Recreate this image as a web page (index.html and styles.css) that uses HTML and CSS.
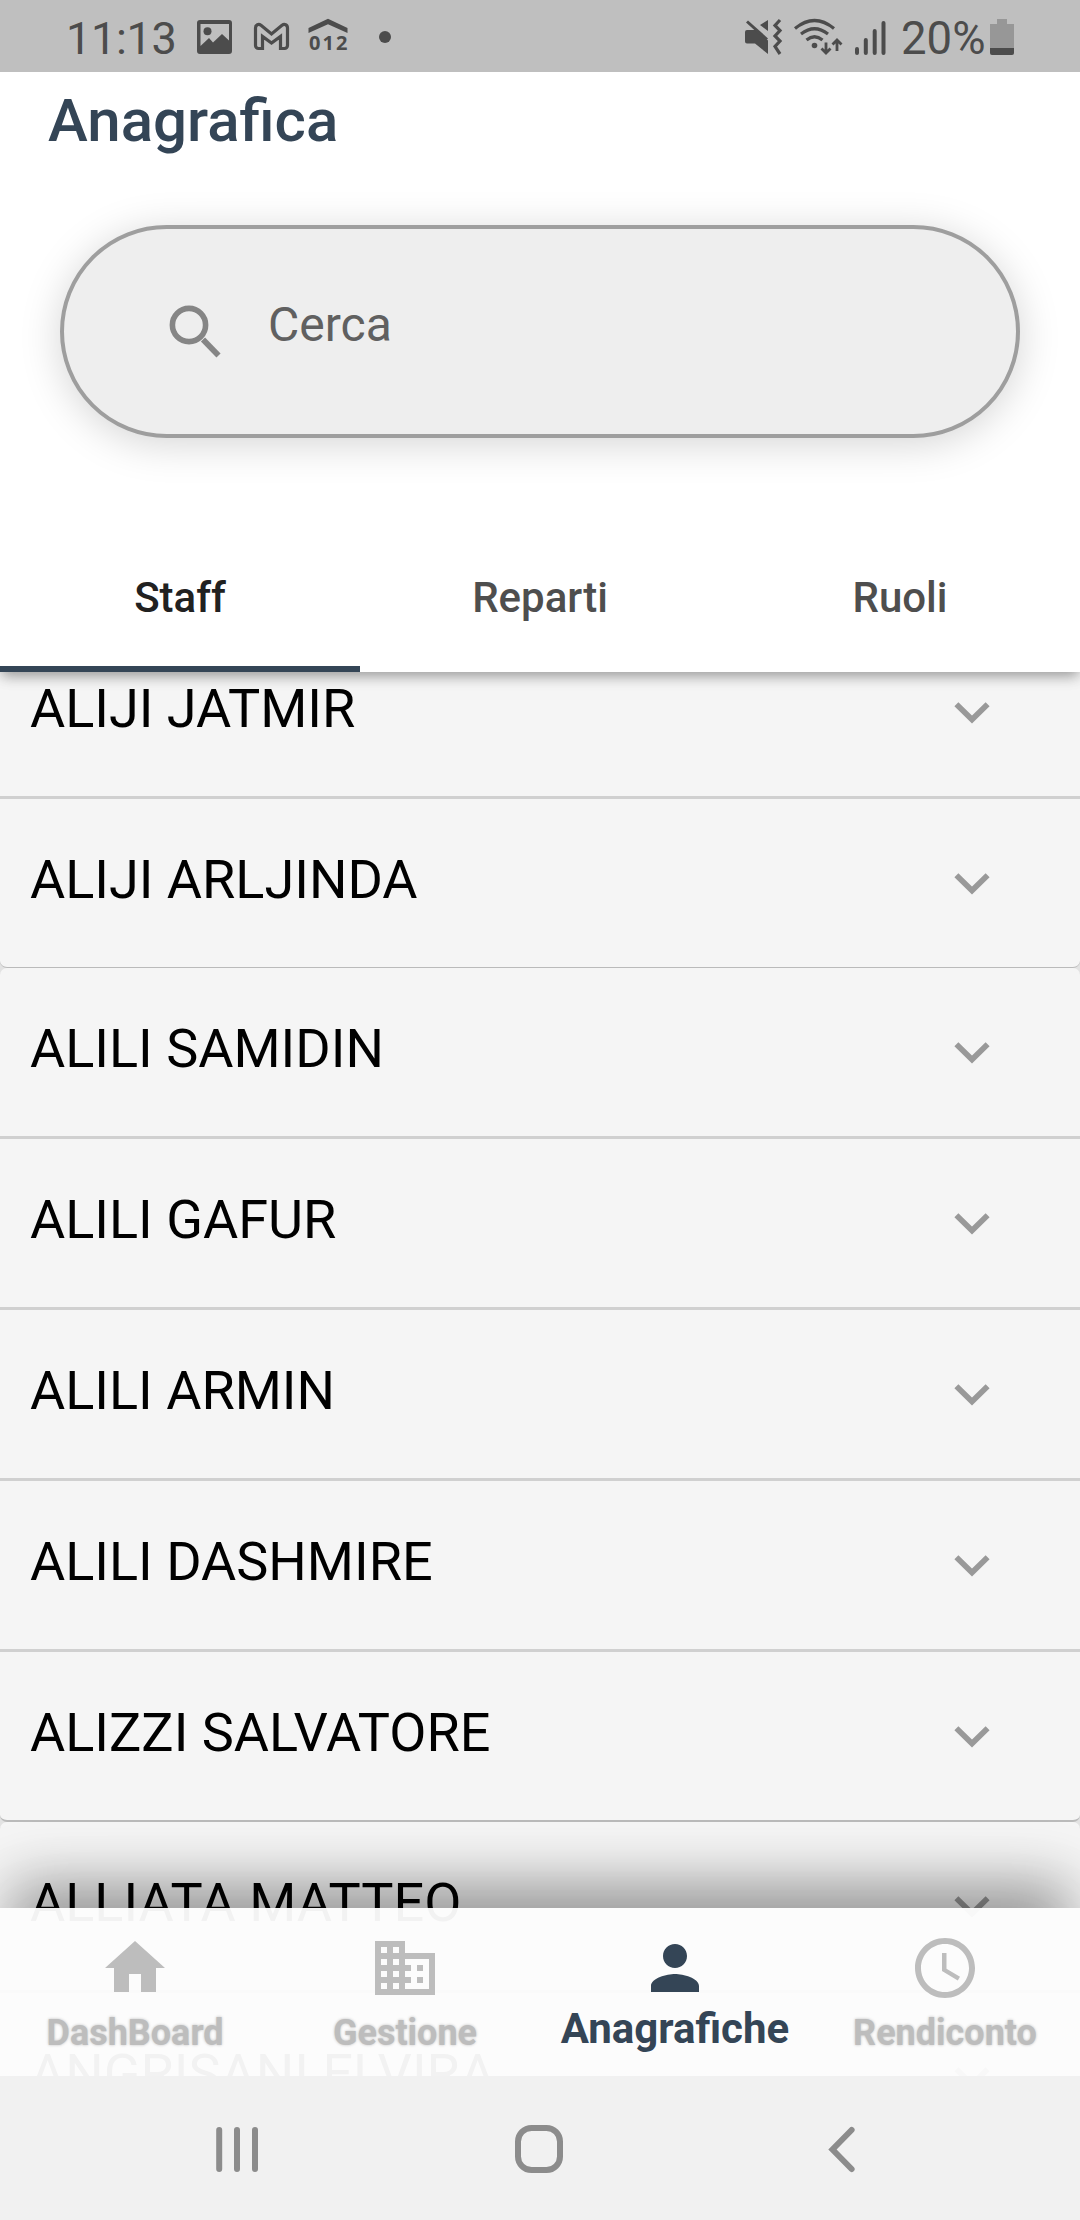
FILE: index.html
```html
<!DOCTYPE html>
<html lang="it">
<head>
<meta charset="utf-8">
<title>Anagrafica</title>
<link rel="stylesheet" href="styles.css">
</head>
<body>
<svg width="0" height="0" class="defs" aria-hidden="true">
  <symbol id="chevron" viewBox="0 0 36 24"><path d="M2.400 3.300 18 18.600 33.600 3.300" fill="none" stroke="currentColor" stroke-width="5.700"/></symbol>
</svg>
<div class="screen">
  <header class="status">
    <span class="clock">11:13</span>
    <svg class="status-left" viewBox="190 0 220 72" fill="#4c4c4c">
      <path fill-rule="evenodd" d="M200 20h29a3 3 0 0 1 3 3v28a3 3 0 0 1-3 3h-29a3 3 0 0 1-3-3V23a3 3 0 0 1 3-3ZM200.500 24v22l8.500-8 4 4.500 9-8.500 7 6.500V24Z"/>
      <circle cx="207.500" cy="31.200" r="4"/>
      <path d="M262.500 48.500h-4a3 3 0 0 1-3-3V28c0-3.300 3-4.600 5.500-2.800L271.500 34 282 25.200c2.500-1.800 5.500-.5 5.500 2.800v17.500a3 3 0 0 1-3 3h-4V36.500L271.500 43l-9-6.500Z" fill="none" stroke="#4c4c4c" stroke-width="3.200"/>
      <path d="M308.500 33v-5L328 18.800l19.500 9.200v5L328 24.300Z"/>
      <text x="309" y="49.500" class="line-number" textLength="38.500">012</text>
      <circle cx="385" cy="37" r="6"/>
    </svg>
    <svg class="status-right" viewBox="740 0 150 72" fill="none" stroke="#4c4c4c">
      <path d="M747 30h8.500L768 40.500V54L755 43.500h-8a2 2 0 0 1-2-2V32a2 2 0 0 1 2-2ZM760 25l8-5v11Z" fill="#4c4c4c" stroke="none"/>
      <path d="m747 21.500 20 18" stroke-width="3"/>
      <path d="m780 20-5 5.500 5 5-5 5.500 5 5-5 5.500 5 7.500" stroke-width="3.200"/>
      <path d="M795 28.500q19.500-16 39 0M801 34q13.500-10.500 27 0M806.500 40q8-6.500 16 0" stroke-width="3.200"/>
      <circle cx="814.500" cy="45.500" r="2.800" fill="#4c4c4c" stroke="none"/>
      <path d="M826 42.500v10M821.500 48.500l4.500 4.500 4.500-4.500M837 51V40.500M832.500 44.500l4.500-4.500 4.500 4.500" stroke-width="2.800"/>
      <path d="M857 49v4M865.800 40v13M874.700 31v22M883.500 23v30" stroke-width="4" stroke-linecap="round"/>
    </svg>
    <span class="percent">20%</span>
    <svg class="battery" viewBox="0 0 24 36"><path d="M7 0h10v5h7v24H0V5h7Z" fill="#979797"/><path d="M0 29h24v5q0 2-2 2H2q-2 0-2-2Z" fill="#4c4c4c"/></svg>
  </header>

  <section class="head">
    <h1 class="title">Anagrafica</h1>
    <div class="search">
      <svg class="search-icon" viewBox="0 0 54 54" fill="none" stroke="#858585"><circle cx="20" cy="20" r="16.600" stroke-width="5.600"/><path d="m34 34.500 15.500 16" stroke-width="5.800"/></svg>
      <span class="placeholder">Cerca</span>
    </div>
    <nav class="tabs">
      <span class="tab tab-active">Staff</span>
      <span class="tab">Reparti</span>
      <span class="tab">Ruoli</span>
    </nav>
  </section>

  <main class="list">
    <div class="row row-first"><span>ALIJI JATMIR</span><svg class="chev"><use href="#chevron"/></svg></div>
    <div class="row row-end row-thin"><span>ALIJI ARLJINDA</span><svg class="chev"><use href="#chevron"/></svg></div>
    <div class="row row-start"><span>ALILI SAMIDIN</span><svg class="chev"><use href="#chevron"/></svg></div>
    <div class="row"><span>ALILI GAFUR</span><svg class="chev"><use href="#chevron"/></svg></div>
    <div class="row"><span>ALILI ARMIN</span><svg class="chev"><use href="#chevron"/></svg></div>
    <div class="row"><span>ALILI DASHMIRE</span><svg class="chev"><use href="#chevron"/></svg></div>
    <div class="row row-end"><span>ALIZZI SALVATORE</span><svg class="chev"><use href="#chevron"/></svg></div>
    <div class="row row-start"><span>ALLIATA MATTEO</span><svg class="chev"><use href="#chevron"/></svg></div>
    <div class="row"><span>ANGRISANI ELVIRA</span><svg class="chev"><use href="#chevron"/></svg></div>
  </main>

  <nav class="bottom">
    <div class="item">
      <svg class="item-icon" viewBox="0 0 24 24"><path d="M10 20v-6h4v6h5v-8h3L12 3 2 12h3v8z"/></svg>
      <span>DashBoard</span>
    </div>
    <div class="item">
      <svg class="item-icon" viewBox="0 0 24 24"><path d="M12 7V3H2v18h20V7H12zM6 19H4v-2h2v2zm0-4H4v-2h2v2zm0-4H4V9h2v2zm0-4H4V5h2v2zm4 12H8v-2h2v2zm0-4H8v-2h2v2zm0-4H8V9h2v2zm0-4H8V5h2v2zm10 12h-8v-2h2v-2h-2v-2h2v-2h-2V9h8v10zm-2-8h-2v2h2v-2zm0 4h-2v2h2v-2z"/></svg>
      <span>Gestione</span>
    </div>
    <div class="item item-active">
      <svg class="item-icon" viewBox="0 0 24 24"><path d="M12 12c2.210 0 4-1.790 4-4s-1.790-4-4-4-4 1.790-4 4 1.790 4 4 4zm0 2c-2.670 0-8 1.340-8 4v2h16v-2c0-2.660-5.330-4-8-4z"/></svg>
      <span>Anagrafiche</span>
    </div>
    <div class="item">
      <svg class="item-icon" viewBox="0 0 24 24"><path d="M11.990 2C6.470 2 2 6.480 2 12s4.470 10 9.990 10C17.520 22 22 17.520 22 12S17.520 2 11.990 2zM12 20c-4.420 0-8-3.580-8-8s3.580-8 8-8 8 3.580 8 8-3.580 8-8 8zM12.500 7H11v6l5.250 3.150.75-1.230-4.500-2.670z"/></svg>
      <span>Rendiconto</span>
    </div>
  </nav>

  <footer class="system">
    <svg viewBox="0 0 60 60"><path d="M12.200 11v39M30 11v39M48 11v39"/></svg>
    <svg viewBox="0 0 60 60"><rect x="8" y="9" width="42" height="42" rx="13.500"/></svg>
    <svg viewBox="0 0 60 60"><path d="M38.600 11 19.500 30.500 38.600 50"/></svg>
  </footer>
</div>
</body>
</html>
```
FILE: styles.css
```css
* { box-sizing: border-box; }
body { margin: 0; font-family: Roboto, "Liberation Sans", sans-serif; }
.defs { display: none; }
.screen {
  width: 1080px; height: 2220px; overflow: hidden;
  display: grid; grid-template-rows: 72px 600px 1236px 168px 144px;
  background: #f5f5f5;
}
.status {
  display: flex; align-items: flex-start; background: #bfbfbf;
  color: #4c4c4c; padding-left: 66px; z-index: 3;
}
.clock { width: 124px; font-size: 45px; line-height: 78px; letter-spacing: -.3px; white-space: nowrap; }
.status-left { width: 220px; height: 72px; margin-right: 330px; flex: none; }
.line-number { font: bold 20px "Open Sans", sans-serif; }
.status-right { width: 150px; height: 72px; flex: none; }
.percent { width: 100px; padding-left: 11px; font-size: 45.500px; line-height: 78px; white-space: nowrap; }
.battery { width: 24px; height: 36px; margin-top: 19px; }

.head {
  display: flex; flex-direction: column; background: #fff; z-index: 2;
  box-shadow: 0 6px 12px -2px rgba(0,0,0,.3), 0 2px 18px rgba(0,0,0,.12);
}
.title {
  margin: 0; padding-left: 48px; height: 153px;
  font-size: 60px; line-height: 97px; font-weight: 500; color: #344556;
}
.search {
  width: 960px; height: 213px; margin-left: 60px; flex: none;
  border: 4px solid #9e9e9e; border-radius: 107px; background: #eee;
  box-shadow: 0 6px 40px rgba(0,0,0,.17);
  display: flex; align-items: flex-start;
}
.search-icon { width: 54px; height: 54px; margin: 76px 0 0 105px; }
.placeholder { margin-left: 45px; font-size: 48px; line-height: 56px; padding-top: 68px; color: #606060; }
.tabs { display: grid; grid-template-columns: repeat(3, 1fr); height: 144px; margin-top: 90px; }
.tab { text-align: center; font-size: 42px; line-height: 140px; height: 144px; font-weight: 500; color: #4e4e4e; border-bottom: 6px solid transparent; }
.tab-active { color: #212121; border-color: #344556; }

.list { display: flex; flex-direction: column; background: #e2e2e2; height: 1404px; overflow: hidden; }
.row {
  height: 171px; flex: none; display: flex; align-items: flex-start; justify-content: space-between;
  padding: 49px 90px 0 30px; background: #f5f5f5; border-bottom: 3px solid #d0d0d0;
  font-size: 54px; line-height: 64px; color: #000;
}
.row-first { height: 127px; padding-top: 5px; }
.row-end { height: 170px; border-bottom: 2px solid #bababa; border-radius: 0 0 7px 7px; }
.row-thin { height: 169px; border-bottom-width: 1px; }
.row-start { border-radius: 7px 7px 0 0; }
.chev { width: 36px; height: 24px; margin-top: 24px; color: #999; }

.bottom {
  display: grid; grid-template-columns: repeat(4, 1fr); z-index: 2;
  background: rgba(252,252,252,.96);
  box-shadow: 0 -38px 56px -12px rgba(0,0,0,.34), 0 0 90px rgba(0,0,0,.08);
}
.item {
  display: flex; flex-direction: column; align-items: center; padding-top: 24px;
  font-size: 36px; font-weight: 700; line-height: 42px; color: #bdbdbd;
  text-shadow: 0 0 3px #bdbdbd;
}
.item-icon { width: 72px; height: 72px; fill: currentColor; margin-bottom: 8px; }
.item-active { color: #344556; font-size: 42px; text-shadow: none; }
.item-active .item-icon { margin-bottom: 4px; }

.system {
  background: #f1f1f1; z-index: 3; display: flex; align-items: center;
  justify-content: space-between; padding: 2px 207px 0;
}
.system svg { width: 60px; height: 60px; fill: none; stroke: #8c8c8c; stroke-width: 6; stroke-linecap: round; stroke-linejoin: miter; }
```
